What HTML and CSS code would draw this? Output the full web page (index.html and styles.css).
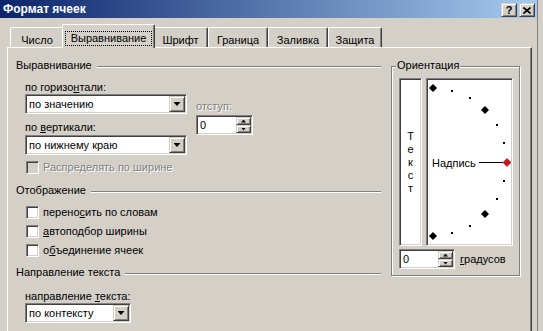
FILE: index.html
```html
<!DOCTYPE html>
<html lang="ru">
<head>
    <meta charset="UTF-8">
    <title>Формат ячеек</title>
    <link rel="stylesheet" href="styles.css">
</head>
<body>
<div class="window">
    <div class="titlebar">
        <span class="title">Формат ячеек</span>
        <span class="cap-btn">?</span>
        <span class="cap-btn">
            <svg width="8" height="7" viewBox="0 0 8 7"><path d="M0.5 0.5L7.5 6.5M7.5 0.5L0.5 6.5" stroke="#000" stroke-width="1.6" fill="none"/></svg>
        </span>
    </div>

    <div class="client">
        <div class="tabs">
            <div class="tab tab-number">Число</div>
            <div class="tab tab-align tab-active"><span class="focus">Выравнивание</span></div>
            <div class="tab tab-font">Шрифт</div>
            <div class="tab tab-border">Граница</div>
            <div class="tab tab-fill">Заливка</div>
            <div class="tab tab-protect">Защита</div>
        </div>

        <div class="page">
            <div class="col-left">
                <div class="group-title">Выравнивание</div>
                <div class="align-row">
                    <div class="align-main">
                        <div class="field-label">по горизо<u>н</u>тали:</div>
                        <div class="combo combo-wide">
                            <span class="combo-text">по значению</span>
                            <span class="drop-btn"></span>
                        </div>
                        <div class="field-label label-second">по <u>в</u>ертикали:</div>
                        <div class="combo combo-wide combo-second">
                            <span class="combo-text">по нижнему краю</span>
                            <span class="drop-btn"></span>
                        </div>
                    </div>
                    <div class="indent">
                        <div class="field-label disabled">отступ:</div>
                        <div class="spin spin-indent">
                            <span class="spin-text">0</span>
                            <span class="spin-btns">
                                <span class="spin-btn spin-up"></span>
                                <span class="spin-btn spin-down"></span>
                            </span>
                        </div>
                    </div>
                </div>
                <div class="check check-disabled"><span class="box"></span><span class="disabled">Распределять по ширине</span></div>

                <div class="group-title group-display">Отображение</div>
                <div class="check check-first"><span class="box box-white"></span>перено<u>с</u>ить по словам</div>
                <div class="check"><span class="box box-white"></span><u>а</u>втоподбор ширины</div>
                <div class="check"><span class="box box-white"></span>о<u>б</u>ъединение ячеек</div>

                <div class="group-title group-direction">Направление текста</div>
                <div class="field-label label-direction">направление <u>т</u>екста:</div>
                <div class="combo combo-narrow">
                    <span class="combo-text">по контексту</span>
                    <span class="drop-btn"></span>
                </div>
            </div>

            <div class="orient">
                <div class="orient-title">Ориентация</div>
                <div class="orient-boxes">
                    <div class="well vtext"><span>Текст</span></div>
                    <div class="well dial">
                        <svg width="83" height="164" viewBox="0 0 83 164">
                            <g fill="#000">
                                <polygon points="5,4 9,8 5,12 1,8"/>
                                <rect x="23" y="10" width="2" height="2"/>
                                <rect x="41" y="17" width="2" height="2"/>
                                <polygon points="57,26 61,30 57,34 53,30"/>
                                <rect x="68" y="44" width="2" height="2"/>
                                <rect x="75" y="62" width="2" height="2"/>
                                <rect x="75" y="100" width="2" height="2"/>
                                <rect x="68" y="118" width="2" height="2"/>
                                <polygon points="57,130 61,134 57,138 53,134"/>
                                <rect x="41" y="145" width="2" height="2"/>
                                <rect x="23" y="152" width="2" height="2"/>
                                <polygon points="5,152 9,156 5,160 1,156"/>
                                <rect x="51" y="82" width="24" height="1"/>
                            </g>
                            <polygon points="79,78.5 83,82.5 79,86.5 75,82.5" fill="#d0101a" stroke="#701010" stroke-width="0.6"/>
                            <text x="4" y="86.5" class="dial-text">Надпись</text>
                        </svg>
                    </div>
                </div>
                <div class="degrees">
                    <div class="spin spin-deg">
                        <span class="spin-text">0</span>
                        <span class="spin-btns">
                            <span class="spin-btn spin-up"></span>
                            <span class="spin-btn spin-down"></span>
                        </span>
                    </div>
                    <span class="degrees-label"><u>г</u>радусов</span>
                </div>
            </div>
        </div>
    </div>
</div>
</body>
</html>
```

FILE: styles.css
```css
:root {
    --face: #d4d0c8;
    --shadow: #808080;
    --dark: #404040;
    --light: #fff;
}

body {
    margin: 0;
    background: var(--face);
    font-family: 'Liberation Sans', Arial, sans-serif;
    font-size: 11px;
    line-height: 13px;
    color: #000;
}

.window {
    width: 537px;
    height: 331px;
    border-right: 1px solid var(--shadow);
    overflow: hidden;
}

/* title bar */
.titlebar {
    height: 18px;
    display: flex;
    align-items: center;
    padding: 0 2px 0 3px;
    background: linear-gradient(to right, #0a246a, #a6caf0);
}

.title {
    flex: 1;
    color: #fff;
    font-weight: bold;
    font-size: 12px;
}

.cap-btn {
    box-sizing: border-box;
    width: 16px;
    height: 14px;
    margin-top: 2px;
    display: flex;
    align-items: center;
    justify-content: center;
    background: var(--face);
    border: 1px solid;
    border-color: var(--face) var(--dark) var(--dark) var(--face);
    box-shadow: inset 1px 1px var(--light), inset -1px -1px var(--shadow);
    font-weight: bold;
    font-size: 11px;
}

.cap-btn + .cap-btn {
    margin-left: 2px;
}

/* tabs */
.client {
    padding: 6px 0 0 7px;
}

.tabs {
    display: flex;
    align-items: flex-end;
    height: 23px;
    padding-left: 3px;
}

.tab {
    box-sizing: border-box;
    height: 20px;
    padding-top: 6px;
    text-align: center;
    background: var(--face);
    border-top: 1px solid var(--light);
    border-left: 1px solid var(--light);
    border-right: 1px solid var(--dark);
    box-shadow: inset -1px 0 var(--shadow);
    border-radius: 2px 2px 0 0;
}

.tab-number { width: 54px; }
.tab-align { width: 93px; }
.tab-font { width: 55px; }
.tab-border { width: 60px; }
.tab-fill { width: 60px; }
.tab-protect { width: 54px; }

.tab-active {
    position: relative;
    z-index: 1;
    height: 24px;
    margin: 0 -2px -1px;
}

.focus {
    display: block;
    margin: 0 2px;
    border: 1px dotted #000;
}

/* page */
.page {
    box-sizing: border-box;
    width: 525px;
    height: 300px;
    display: flex;
    align-items: flex-start;
    padding: 11px 0 0 8px;
    border-top: 1px solid var(--light);
    border-left: 1px solid var(--light);
    border-right: 1px solid var(--dark);
    box-shadow: inset -1px 0 var(--shadow);
}

.col-left {
    width: 365px;
}

.group-title {
    display: flex;
}

.group-title::after {
    content: "";
    flex: 1;
    height: 0;
    margin: 7px 0 0 5px;
    border-top: 1px solid var(--shadow);
    border-bottom: 1px solid var(--light);
}

.group-display { margin-top: 10px; }
.group-direction { margin-top: 9px; }

.align-row {
    display: flex;
    margin: 9px 0 0 9px;
}

.align-main {
    width: 162px;
}

.label-second { margin-top: 7px; }
.combo-second { margin-top: 1px; }

.label-direction {
    margin: 11px 0 0 9px;
}

.indent {
    margin-left: 9px;
    padding-top: 19px;
}

.indent .spin {
    margin-top: 2px;
}

.disabled {
    color: var(--shadow);
    text-shadow: 1px 1px var(--light);
}

/* sunken fields */
.combo,
.spin,
.box,
.well {
    box-sizing: border-box;
    background: #fff;
    border: 1px solid;
    border-color: var(--shadow) var(--light) var(--light) var(--shadow);
    box-shadow: inset 1px 1px var(--dark), inset -1px -1px var(--face);
}

.combo,
.spin {
    height: 20px;
    display: flex;
    padding: 1px;
}

.combo-wide { width: 162px; }

.combo-narrow {
    width: 106px;
    margin-left: 9px;
}

.combo-text,
.spin-text {
    flex: 1;
    padding-left: 2px;
    line-height: 16px;
    white-space: nowrap;
}

/* raised buttons */
.drop-btn,
.spin-btn {
    box-sizing: border-box;
    display: flex;
    align-items: center;
    justify-content: center;
    background: var(--face);
    border: 1px solid;
    border-color: var(--face) var(--dark) var(--dark) var(--face);
    box-shadow: inset 1px 1px var(--light), inset -1px -1px var(--shadow);
}

.drop-btn {
    width: 16px;
    height: 16px;
}

.drop-btn::after {
    content: "";
    width: 7px;
    height: 4px;
    background: #000;
    clip-path: polygon(0 0, 100% 0, 50% 100%);
}

.spin-indent { width: 57px; }
.spin-deg { width: 56px; }

.spin-btns {
    display: flex;
    flex-direction: column;
    width: 15px;
}

.spin-btn {
    height: 8px;
}

.spin-up::after,
.spin-down::after {
    content: "";
    width: 5px;
    height: 3px;
    background: #000;
}

.spin-up::after {
    clip-path: polygon(50% 0, 100% 100%, 0 100%);
}

.spin-down::after {
    clip-path: polygon(0 0, 100% 0, 50% 100%);
}

/* checkboxes */
.check {
    display: flex;
    align-items: center;
    height: 13px;
    margin: 6px 0 0 10px;
}

.check-first { margin-top: 9px; }

.box {
    width: 13px;
    height: 13px;
    margin-right: 4px;
    background: var(--face);
}

.box-white {
    background: #fff;
}

/* orientation */
.orient {
    box-sizing: border-box;
    width: 129px;
    margin: 7px 0 0 10px;
    padding-bottom: 6px;
    border: 1px solid var(--shadow);
    box-shadow: inset 1px 1px var(--light), 1px 1px var(--light);
}

.orient-title {
    width: fit-content;
    margin: -8px 0 0 4px;
    padding: 0 1px;
    background: var(--face);
}

.orient-boxes {
    display: flex;
    height: 168px;
    margin: 6px 0 0 7px;
}

.vtext {
    width: 23px;
    display: flex;
    align-items: center;
    justify-content: center;
}

.vtext span {
    width: 8px;
    word-break: break-all;
    text-align: center;
    line-height: 13px;
}

.dial {
    width: 87px;
    margin-left: 4px;
    padding: 1px;
}

.dial svg {
    display: block;
}

.dial-text {
    font-family: 'Liberation Sans', Arial, sans-serif;
    font-size: 11px;
}

.degrees {
    display: flex;
    align-items: center;
    margin: 3px 0 0 7px;
}

.degrees-label {
    margin-left: 5px;
}
```
